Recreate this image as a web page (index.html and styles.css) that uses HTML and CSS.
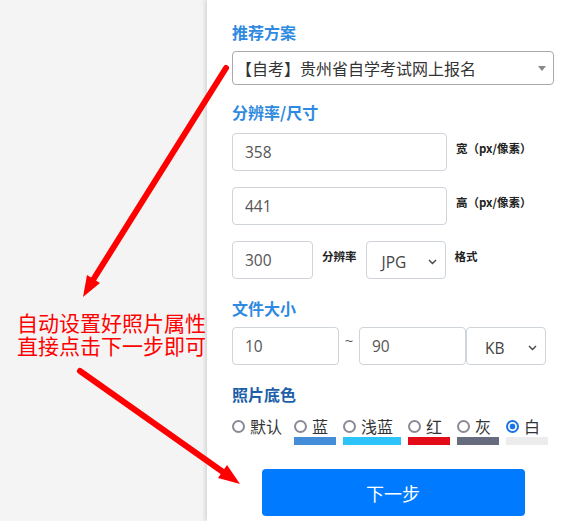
FILE: index.html
```html
<!DOCTYPE html>
<html lang="zh">
<head>
<meta charset="utf-8">
<link rel="stylesheet" href="styles.css">
</head>
<body>
<div class="page">
  <aside class="side">
    <p class="note"><span class="note-line">自动设置好照片属性</span><span class="note-line">直接点击下一步即可</span></p>
  </aside>
  <main class="panel">
    <h3 class="sec">推荐方案</h3>
    <div class="plan-select">
      <span>【自考】贵州省自学考试网上报名</span>
      <svg class="tri" width="8" height="5" viewBox="0 0 8 5"><path d="M0 0H8L4 5Z" fill="#888"/></svg>
    </div>

    <h3 class="sec sec-2">分辨率/尺寸</h3>
    <div class="row">
      <input class="field w-lg" value="358">
      <span class="lbl">宽（px/像素）</span>
    </div>
    <div class="row gap-row">
      <input class="field w-lg" value="441">
      <span class="lbl">高（px/像素）</span>
    </div>
    <div class="row gap-row">
      <input class="field w-sm" value="300">
      <span class="lbl lbl-mid">分辨率</span>
      <div class="dd w-dd">
        <span>JPG</span>
        <svg width="9" height="6" viewBox="0 0 9 6"><path d="M1 1L4.5 4.5L8 1" fill="none" stroke="#444" stroke-width="1.4"/></svg>
      </div>
      <span class="lbl">格式</span>
    </div>

    <h3 class="sec sec-3">文件大小</h3>
    <div class="row">
      <input class="field w-md" value="10">
      <span class="tilde">~</span>
      <input class="field w-md2" value="90">
      <div class="dd w-dd kb">
        <span>KB</span>
        <svg width="9" height="6" viewBox="0 0 9 6"><path d="M1 1L4.5 4.5L8 1" fill="none" stroke="#444" stroke-width="1.4"/></svg>
      </div>
    </div>

    <h3 class="sec sec-dark">照片底色</h3>
    <div class="colors">
      <label class="opt"><span class="ctl"><span class="radio"></span>默认</span></label>
      <label class="opt"><span class="ctl"><span class="radio"></span>蓝</span><span class="bar c-blue"></span></label>
      <label class="opt"><span class="ctl"><span class="radio"></span>浅蓝</span><span class="bar c-lblue"></span></label>
      <label class="opt"><span class="ctl"><span class="radio"></span>红</span><span class="bar c-red"></span></label>
      <label class="opt"><span class="ctl"><span class="radio"></span>灰</span><span class="bar c-gray"></span></label>
      <label class="opt"><span class="ctl"><span class="radio on"></span>白</span><span class="bar c-white"></span></label>
    </div>

    <div class="actions">
      <button class="next">下一步</button>
    </div>
  </main>
</div>
<svg class="arrows" width="571" height="521" viewBox="0 0 571 521">
  <line x1="226" y1="68" x2="93" y2="280" stroke="#ff0000" stroke-width="6" stroke-linecap="round"/>
  <polygon points="83,297 100,283 87,275" fill="#ff0000"/>
  <line x1="80" y1="371" x2="223" y2="472" stroke="#ff0000" stroke-width="6" stroke-linecap="round"/>
  <polygon points="240,484 218,478 227,465" fill="#ff0000"/>
</svg>
</body>
</html>
```
FILE: styles.css
```css
* { box-sizing: border-box; }
html, body { margin: 0; padding: 0; }
body {
  width: 571px;
  height: 521px;
  overflow: hidden;
  background: #f4f4f4;
  font-family: "Noto Sans CJK SC", "Open Sans", sans-serif;
  position: relative;
}
.page {
  display: flex;
  height: 521px;
}
.side {
  width: 207px;
  flex: none;
  padding-top: 311px;
}
.note {
  margin: 0;
  color: #ff0000;
  font-size: 21px;
  text-align: center;
  padding-left: 16px;
  white-space: nowrap;
  display: flex;
  flex-direction: column;
  gap: 0;
}
.note-line {
  display: block;
  height: 23px;
  line-height: 23px;
}
.panel {
  flex: 1;
  min-width: 0;
  background: #fff;
  box-shadow: -2px 0 4px rgba(0, 0, 0, 0.13);
  padding: 21px 10px 0 25px;
}
.sec {
  margin: 0;
  font-size: 16px;
  line-height: 22px;
  font-weight: 700;
  color: #2e8ae0;
}
.sec-2 { margin-top: 16px; margin-bottom: 10px; }
.sec-3 { margin-top: 18px; margin-bottom: 8px; }
.sec-dark { margin-top: 18px; margin-bottom: 10px; color: #1d5fa8; }

.plan-select {
  margin-top: 8px;
  width: 322px;
  height: 34px;
  border: 1px solid #aaa;
  border-radius: 4px;
  display: flex;
  align-items: center;
  justify-content: space-between;
  padding: 0 7px 0 3px;
  font-size: 16px;
  color: #333;
}
.plan-select .tri { margin-top: 1px; }

.row {
  display: flex;
  align-items: flex-start;
}
.gap-row { margin-top: 16px; }
.field {
  flex: none;
  height: 38px;
  border: 1px solid #ced4da;
  border-radius: 4px;
  padding: 0 12px;
  font-family: "Open Sans", "Noto Sans CJK SC", sans-serif;
  font-size: 15.5px;
  color: #555;
  background: #fff;
  outline: none;
}
.w-lg { width: 215px; }
.w-sm { width: 81px; }
.w-md { width: 107px; }
.w-md2 { width: 107px; }
.lbl {
  font-size: 11.5px;
  line-height: 16px;
  font-weight: 700;
  color: #222;
  padding-top: 7px;
  margin-left: 9px;
  white-space: nowrap;
}
.lbl-mid { margin-right: 9px; }
.dd {
  flex: none;
  height: 38px;
  border: 1px solid #ced4da;
  border-radius: 4px;
  display: flex;
  align-items: center;
  justify-content: space-between;
  padding: 3px 8px 0 15px;
  font-family: "Open Sans", "Noto Sans CJK SC", sans-serif;
  font-size: 15.5px;
  color: #444;
}
.w-dd { width: 80px; }
.kb { padding-left: 18px; }
.tilde {
  width: 20px;
  text-align: center;
  font-family: "Open Sans", sans-serif;
  font-size: 15px;
  color: #555;
  line-height: 16px;
  padding-top: 5px;
}

.colors {
  display: flex;
  align-items: flex-start;
}
.opt {
  flex: none;
  display: flex;
  flex-direction: column;
  margin-right: 7px;
}
.ctl {
  display: flex;
  align-items: center;
  gap: 5px;
  font-size: 16px;
  line-height: 22px;
  color: #333;
  padding-right: 8px;
  white-space: nowrap;
}
.opt:first-child .ctl { padding-right: 5px; }
.radio {
  width: 13px;
  height: 13px;
  border-radius: 50%;
  border: 2px solid #8a8a96;
  flex: none;
}
.radio.on {
  border-color: #1a73e8;
  background: radial-gradient(circle, #1a73e8 0 2.6px, #fff 3.2px);
}
.bar { height: 8px; display: block; }
.c-blue { background: #448dd9; }
.c-lblue { background: #2dc3fb; }
.c-red { background: #e30b17; }
.c-gray { background: #676b7e; }
.c-white { background: #ececec; }

.actions {
  width: 322px;
  display: flex;
  justify-content: center;
  margin-top: 24px;
}
.next {
  width: 263px;
  height: 47px;
  border: none;
  border-radius: 4px;
  background: #007bff;
  color: #fff;
  font-family: "Noto Sans CJK SC", sans-serif;
  font-size: 18px;
  padding: 0;
}
.arrows {
  position: absolute;
  left: 0;
  top: 0;
  pointer-events: none;
}
```
